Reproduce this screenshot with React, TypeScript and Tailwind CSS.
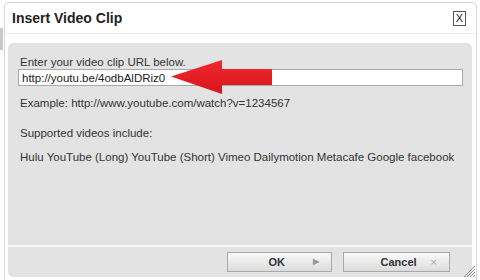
import React from "react";

export default function App() {
  return (
    <div
      className="relative w-[480px] h-[280px] bg-white overflow-hidden flex"
      style={{ fontFamily: '"Liberation Sans", Arial, sans-serif' }}
    >
      <div className="w-[4px] shrink-0">
        <div className="mt-[28px] h-[22px] w-[3px] bg-[#c8c8c8]" />
      </div>
      <div className="mt-[2px] w-[473px] h-[290px] shrink-0 border border-[#d6d6d6] rounded-[5px] bg-white flex flex-col">
        <div className="h-[31px] flex items-center justify-between pl-[7px] pr-[10px] border-b border-[#ececec]">
          <span className="text-[14px] font-bold text-[#222]">Insert Video Clip</span>
          <div className="w-[13px] h-[15px] border border-[#555] flex items-center justify-center text-[11px] leading-none text-[#222] bg-white">
            X
          </div>
        </div>
        <div className="ml-[3px] mt-[9px] w-[464px] rounded-[5px] bg-[#e3e3e3] flex flex-col text-[11.5px] leading-[14px] text-[#333]">
          <div className="h-[202px] pt-[12px] pl-[12px] flex flex-col">
            <div>Enter your video clip URL below.</div>
            <div className="relative -ml-[2px] w-[445px] h-[17px] bg-white border border-[#a9a9a9] flex items-center pl-[3px] text-[#222]">
              http://youtu.be/4odbAlDRiz0
              <svg
                className="absolute left-[152px] top-[-10px]"
                width="102"
                height="35"
                viewBox="0 0 102 35"
              >
                <defs>
                  <linearGradient id="rg" x1="0" y1="0" x2="0" y2="1">
                    <stop offset="0" stopColor="#ee2a2f" />
                    <stop offset="1" stopColor="#d7141b" />
                  </linearGradient>
                </defs>
                <polygon
                  points="0,16.5 51,0 51,9 101,9 101,25 51,25 51,34"
                  fill="url(#rg)"
                />
              </svg>
            </div>
            <div className="mt-[10px]">Example: http://www.youtube.com/watch?v=1234567</div>
            <div className="mt-[16px]">Supported videos include:</div>
            <div className="mt-[10px] whitespace-nowrap">
              Hulu YouTube (Long) YouTube (Short) Vimeo Dailymotion Metacafe Google facebook
            </div>
          </div>
          <div className="h-[2px] bg-[#f7f7f7]" />
          <div className="h-[30px] flex items-start justify-end pr-[22px] pt-[5px] gap-[11px]">
            <div className="w-[105px] h-[20px] border border-[#a8a8a8] bg-gradient-to-b from-[#fafafa] to-[#dcdcdc] flex items-center justify-end pr-[12px] text-[11px] font-bold text-[#333]">
              <span className="mr-[28px]">OK</span>
              <span className="text-[8px] text-[#999]">▶</span>
            </div>
            <div className="w-[107px] h-[20px] border border-[#a8a8a8] bg-gradient-to-b from-[#fafafa] to-[#dcdcdc] flex items-center justify-end pr-[12px] text-[11px] font-bold text-[#333]">
              <span className="mr-[14px]">Cancel</span>
              <span className="text-[11px] font-normal text-[#aaa]">×</span>
            </div>
          </div>
        </div>
      </div>
      <svg className="absolute left-[463px] top-[265px]" width="13" height="13" viewBox="0 0 13 13">
        <line x1="1" y1="12" x2="12" y2="1" stroke="#888" strokeWidth="1" />
        <line x1="4" y1="12" x2="12" y2="4" stroke="#888" strokeWidth="1" />
        <line x1="7" y1="12" x2="12" y2="7" stroke="#888" strokeWidth="1" />
        <line x1="10" y1="12" x2="12" y2="10" stroke="#888" strokeWidth="1" />
      </svg>
    </div>
  );
}
